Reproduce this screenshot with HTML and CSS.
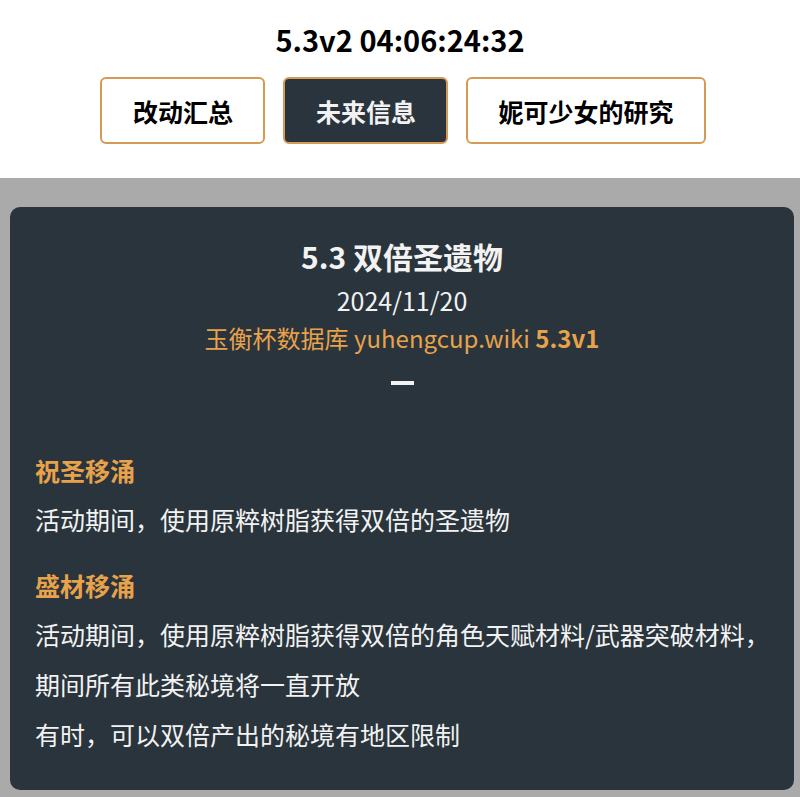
FILE: index.html
```html
<!DOCTYPE html>
<html lang="zh-CN">
<head>
    <meta charset="UTF-8">
    <meta name="viewport" content="width=device-width, initial-scale=1.0">
    <title>未来信息</title>
    <link rel="stylesheet" href="styles.css">
</head>
<body>
    <div class="top">
        <h1 class="countdown">5.3v2 04:06:24:32</h1>
        <div class="tabs">
            <button class="tab">改动汇总</button>
            <button class="tab active">未来信息</button>
            <button class="tab">妮可少女的研究</button>
        </div>
    </div>

    <div class="card">
        <h2 class="card-title">5.3 双倍圣遗物</h2>
        <div class="date">2024/11/20</div>
        <div class="source">玉衡杯数据库 yuhengcup.wiki <b>5.3v1</b></div>
        <div class="divider"></div>

        <h3 class="event">祝圣移涌</h3>
        <div class="line first">活动期间，使用原粹树脂获得双倍的圣遗物</div>

        <h3 class="event">盛材移涌</h3>
        <div class="line first">活动期间，使用原粹树脂获得双倍的角色天赋材料/武器突破材料，</div>
        <div class="line">期间所有此类秘境将一直开放</div>
        <div class="line">有时，可以双倍产出的秘境有地区限制</div>
    </div>
</body>
</html>
```

FILE: styles.css
```css
body {
    margin: 0;
    background-color: #aaaaaa;
    font-family: "Noto Sans CJK SC", "Noto Sans", sans-serif;
    color: #000;
}

.top {
    background-color: #fff;
    padding: 19px 0 34px;
    text-align: center;
}

.countdown {
    margin: 0;
    font-size: 29px;
    line-height: 40px;
    font-weight: bold;
}

.tabs {
    display: flex;
    justify-content: center;
    gap: 18px;
    margin-top: 18px;
    padding-left: 6px;
}

.tab {
    height: 67px;
    min-width: 165px;
    padding: 0 30px;
    font-family: inherit;
    font-size: 25px;
    font-weight: bold;
    color: #000;
    background-color: #fff;
    border: 2.5px solid #d59a55;
    border-radius: 6px;
    cursor: pointer;
}

.tab.active {
    background-color: #29343c;
    color: #f2f2f2;
}

.card {
    margin: 29px 6px 8px 10px;
    padding: 29px 25px 31px;
    background-color: #29343c;
    border-radius: 10px;
    color: #f2f2f2;
}

.card-title {
    margin: 0 0 5px;
    text-align: center;
    font-size: 30px;
    line-height: 40px;
    font-weight: bold;
}

.date,
.source {
    text-align: center;
    font-size: 25px;
    line-height: 38px;
}

.source {
    font-size: 24px;
    color: #e8a24b;
}

.divider {
    width: 23px;
    height: 4px;
    margin: 24px auto 0;
    background-color: #f2f2f2;
}

.event {
    margin: 65px 0 0;
    font-size: 25px;
    line-height: 40px;
    font-weight: bold;
    color: #e8a24b;
}

.line + .event {
    margin-top: 21px;
}

.line {
    font-size: 25px;
    line-height: 50px;
    white-space: nowrap;
}

.line.first {
    margin-top: 4px;
}
```
